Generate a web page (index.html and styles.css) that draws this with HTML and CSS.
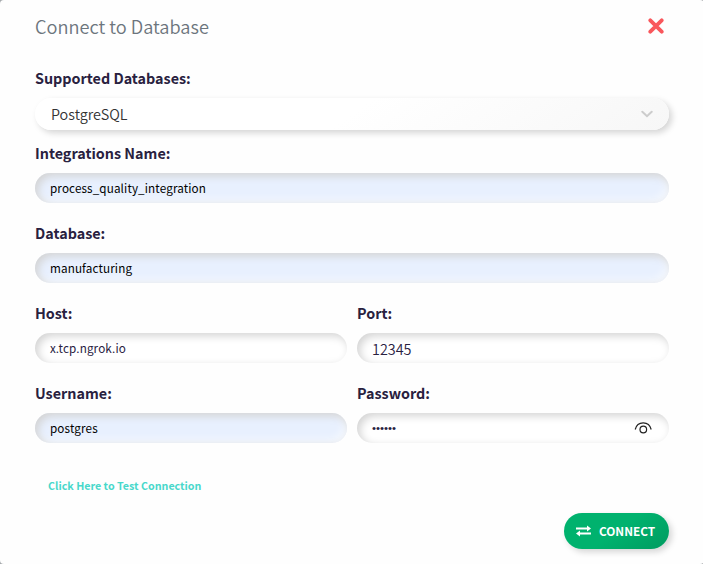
FILE: index.html
```html
<!DOCTYPE html>
<html lang="en">
<head>
<meta charset="utf-8">
<title>Connect to Database</title>
<link rel="stylesheet" href="styles.css">
</head>
<body>
<main class="modal">
  <header class="modal-header">
    <h1 class="title"><span>Connect to Database</span></h1>
    <button class="close" aria-label="Close"><svg width="16" height="16" viewBox="0 0 16 16"><path d="M2.3 2.3 13.7 13.7M13.7 2.3 2.3 13.7"/></svg></button>
  </header>
  <form class="form">
    <div class="field field-select">
      <label class="label"><span>Supported Databases:</span></label>
      <div class="select"><span class="select-value">PostgreSQL</span><svg class="chevron" width="12" height="8" viewBox="0 0 12 8"><path d="M1.3 1.7 6 6.2 10.7 1.7"/></svg></div>
    </div>
    <div class="field">
      <label class="label"><span>Integrations Name:</span></label>
      <div class="input filled"><span>process_quality_integration</span></div>
    </div>
    <div class="field">
      <label class="label"><span>Database:</span></label>
      <div class="input filled"><span>manufacturing</span></div>
    </div>
    <div class="row">
      <div class="field">
        <label class="label"><span>Host:</span></label>
        <div class="input"><span>x.tcp.ngrok.io</span></div>
      </div>
      <div class="field">
        <label class="label"><span>Port:</span></label>
        <div class="input port"><span>12345</span></div>
      </div>
      <div class="field">
        <label class="label"><span>Username:</span></label>
        <div class="input filled"><span>postgres</span></div>
      </div>
      <div class="field">
        <label class="label"><span>Password:</span></label>
        <div class="input password"><span class="dots">••••••</span><svg class="eye" width="18" height="12" viewBox="0 0 18 12"><path d="M1.200 7.500C2.200 3.300 5 .800 9.200 .800S16.200 3.300 17.200 7.500"/><circle cx="9.300" cy="7.500" r="3.300"/></svg></div>
      </div>
    </div>
  </form>
  <a class="test-link"><span>Click Here to Test Connection</span></a>
  <footer class="modal-footer">
    <button class="connect"><svg width="15" height="12" viewBox="0 0 15 12"><path class="line" d="M0 3.500H12M3 8.500H15"/><path class="head" d="M11 .5 15 3.500 11 6.500ZM4 5.500 0 8.500 4 11.500Z"/></svg><span>CONNECT</span></button>
  </footer>
</main>
</body>
</html>
```
FILE: styles.css
```css
* { box-sizing: border-box; }
body {
  margin: 0;
  background: #a5a9ac;
  font-family: "Noto Sans CJK SC", "Noto Sans", sans-serif;
  color: #29213f;
}
button { border: 0; padding: 0; font-family: inherit; }
svg { display: block; fill: none; }
.modal {
  width: 704px;
  height: 564px;
  padding: 12px 35px 0;
  background: #fefefe;
  border-radius: 4px;
}
.modal-header {
  display: flex;
  justify-content: space-between;
  width: 634px;
  height: 54px;
}
.title {
  margin: 0;
  font-size: 18.2px;
  font-weight: 350;
  line-height: 28px;
  color: #6c757d;
}
.close { width: 16px; height: 16px; margin: 6px 5px 0 0; background: none; }
.close path { stroke: #f9575c; stroke-width: 3.8; stroke-linecap: round; }
.form, .row { width: 634px; }
.field { height: 80px; }
.field-select { height: 75px; }
.label {
  display: block;
  height: 32px;
  font-size: 14.35px;
  font-weight: 700;
  line-height: 23px;
}
.select {
  display: flex;
  align-items: center;
  justify-content: space-between;
  height: 32px;
  padding: 0 16px;
  border-radius: 16px;
  background: linear-gradient(145deg, #fff 50%, #f7f7f7);
  box-shadow: 3px 3px 6px #d5d5d5, -3px -3px 6px #fefefe;
  font-size: 14.4px;
  font-weight: 350;
  color: #333;
}
.select-value { padding-bottom: 2px; }
.chevron path { stroke: #ccc; stroke-width: 2; stroke-linecap: round; }
.input {
  display: flex;
  align-items: center;
  height: 30px;
  padding: 0 15px 2px;
  border-radius: 15px;
  background: #fff;
  box-shadow: inset 3px 3px 8px #d3d3d3, inset -3px -3px 8px rgba(255, 255, 255, 0.65);
  font-size: 11.7px;
  letter-spacing: 0.12px;
}
.filled {
  background: #e8f0fe;
  color: #000;
}
.port { padding-bottom: 0; font-size: 14.4px; letter-spacing: 0; font-weight: 350; }
.password { justify-content: space-between; padding-right: 17px; padding-bottom: 1px; }
.dots { font-family: "Liberation Sans", sans-serif; font-size: 11.4px; letter-spacing: 0; }
.eye path, .eye circle { stroke: #222; stroke-width: 1.2; }
.row { display: grid; grid-template-columns: 312px 312px; gap: 0 10px; }
.test-link {
  display: block;
  height: 22px;
  margin: 14px 0 0 13px;
  font-size: 10.7px;
  font-weight: 700;
  line-height: 21px;
  color: #48d8cb;
}
.modal-footer { display: flex; justify-content: flex-end; width: 634px; margin-top: 16px; }
.connect {
  display: flex;
  align-items: center;
  gap: 8px;
  width: 105px;
  height: 36px;
  padding-left: 12px;
  border-radius: 18px;
  background: linear-gradient(145deg, #00b26e 50%, #009b60);
  box-shadow: 3px 3px 6px #d5d5d5;
  color: #fff;
  font-size: 11.8px;
  font-weight: 700;
}
.connect span { padding-bottom: 2px; }
.connect .line { stroke: #fff; stroke-width: 2; }
.connect .head { fill: #fff; }
```
